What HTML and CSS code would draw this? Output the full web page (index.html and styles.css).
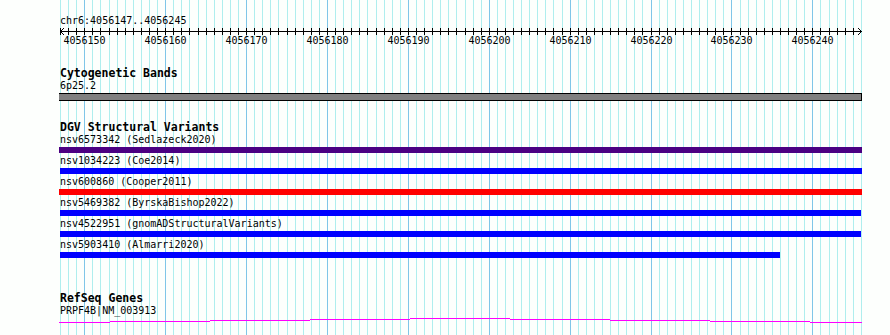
FILE: index.html
```html
<!DOCTYPE html>
<html>
  <head>
    <title>chr6:4056147..4056245</title>
    <link rel="stylesheet" href="styles.css">
  </head>
  <body>
    <div class="view">
      <div class="grid"></div>

      <div class="tracks">
        <div class="ruler">
          <div class="locus">chr6:4056147..4056245</div>
          <svg class="scale" width="890" height="22"></svg>
        </div>

        <div class="track cyto">
          <div class="track-label">Cytogenetic Bands</div>
          <div class="feature-name">6p25.2</div>
          <div class="band"></div>
        </div>

        <div class="track dgv">
          <div class="track-label">DGV Structural Variants</div>

          <div class="sv">
            <div class="feature-name">nsv6573342 (Sedlazeck2020)</div>
            <div class="bar indigo" style="margin-left:59px;width:803px"></div>
          </div>
          <div class="sv">
            <div class="feature-name">nsv1034223 (Coe2014)</div>
            <div class="bar blue" style="margin-left:60px;width:802px"></div>
          </div>
          <div class="sv">
            <div class="feature-name">nsv600860 (Cooper2011)</div>
            <div class="bar red" style="margin-left:59px;width:803px"></div>
          </div>
          <div class="sv">
            <div class="feature-name">nsv5469382 (ByrskaBishop2022)</div>
            <div class="bar blue" style="margin-left:60px;width:801px"></div>
          </div>
          <div class="sv">
            <div class="feature-name">nsv4522951 (gnomADStructuralVariants)</div>
            <div class="bar blue" style="margin-left:60px;width:801px"></div>
          </div>
          <div class="sv">
            <div class="feature-name">nsv5903410 (Almarri2020)</div>
            <div class="bar blue" style="margin-left:60px;width:720px"></div>
          </div>
        </div>

        <div class="track refseq">
          <div class="track-label">RefSeq Genes</div>
          <div class="feature-name">PRPF4B|NM_003913</div>
          <!-- intron line, bends up a pixel every 100px -->
          <svg class="gene" width="890" height="7" shape-rendering="crispEdges">
            <rect x="59" y="5" width="51" height="1" />
            <rect x="110" y="4" width="100" height="1" />
            <rect x="210" y="3" width="100" height="1" />
            <rect x="310" y="2" width="100" height="1" />
            <rect x="410" y="1" width="100" height="1" />
            <rect x="510" y="2" width="100" height="1" />
            <rect x="610" y="3" width="100" height="1" />
            <rect x="710" y="4" width="100" height="1" />
            <rect x="810" y="5" width="52" height="1" />
          </svg>
        </div>
      </div>
    </div>

    <script src="script.js"></script>
  </body>
</html>
```

FILE: styles.css
```css
body {
  margin: 0;
  background-color: #fdfffd;
  font-family: "DejaVu Sans Mono", monospace;
  color: black;
}

.view {
  position: relative;
  width: 890px;
  height: 335px;
  overflow: hidden;
}

/* base grid, drawn behind everything */
.grid {
  position: absolute;
  top: 0;
  left: 0;
  right: 0;
  bottom: 0;
  z-index: 0;
}
.gridline {
  position: absolute;
  top: 0;
  bottom: 0;
  width: 1px;
  background-color: #afeeee;
}
.gridline.major {
  background-color: #80c6e8;
}

.tracks {
  position: relative;
  z-index: 1;
}

.locus {
  padding-left: 60px;
  margin-top: 15px;
  font-size: 10px;
  line-height: 12px;
}
.scale {
  display: block;
}
.scale text {
  font-family: "DejaVu Sans Mono", monospace;
  font-size: 10px;
}

.track-label {
  padding-left: 60px;
  font-size: 11.5px;
  font-weight: bold;
  line-height: 13px;
}
.feature-name {
  padding-left: 60px;
  font-size: 10px;
  line-height: 12px;
  white-space: nowrap;
}

.cyto {
  margin-top: 18px;
}
.band {
  margin-top: 1px;
  margin-left: 59px;
  width: 802px;
  height: 6px;
  background-color: #808080;
  border-top: 1px solid black;
  border-bottom: 1px solid black;
  border-right: 1px solid black;
}

.dgv {
  margin-top: 20px;
}
.sv {
  padding-bottom: 2px;
}
.bar {
  margin-top: 1px;
  height: 6px;
}
.indigo {
  background-color: #4b0082;
}
.blue {
  background-color: #0000ff;
}
.red {
  background-color: #ff0000;
}

.refseq {
  margin-top: 32px;
}
.gene {
  display: block;
  fill: #ff00ff;
}
```

FILE: script.js
```js
var start = 4056147;
var end = 4056245;
var left = 60;
var bpPx = 8.09;

function xFor(bp) {
  return Math.round(left + (bp - start) * bpPx);
}

// vertical grid lines, one per base
var grid = document.querySelector('.grid');
for (var bp = start; bp <= end + 1; bp++) {
  var line = document.createElement('div');
  line.className = bp % 10 === 0 ? 'gridline major' : 'gridline';
  line.style.left = xFor(bp) + 'px';
  grid.appendChild(line);
}

// scale bar with ticks and labels
var svgNS = 'http://www.w3.org/2000/svg';
var scale = document.querySelector('.scale');
var html = '<g stroke="black" fill="none" shape-rendering="crispEdges">';
html += '<line x1="60" y1="4.5" x2="862" y2="4.5" />';
for (var bp = start; bp <= end; bp++) {
  var x = xFor(bp) + 0.5;
  html += '<line x1="' + x + '" y1="1" x2="' + x + '" y2="8" />';
}
html += '</g>';
html += '<polyline points="64,1 60.5,4.5 64,8" stroke="black" fill="none" />';
html += '<polyline points="858,1 861.5,4.5 858,8" stroke="black" fill="none" />';
for (var bp = start; bp <= end; bp++) {
  if (bp % 10 === 0) {
    html += '<text x="' + (xFor(bp) + 0.5) + '" y="17" text-anchor="middle">' + bp + '</text>';
  }
}
scale.innerHTML = html;
```
